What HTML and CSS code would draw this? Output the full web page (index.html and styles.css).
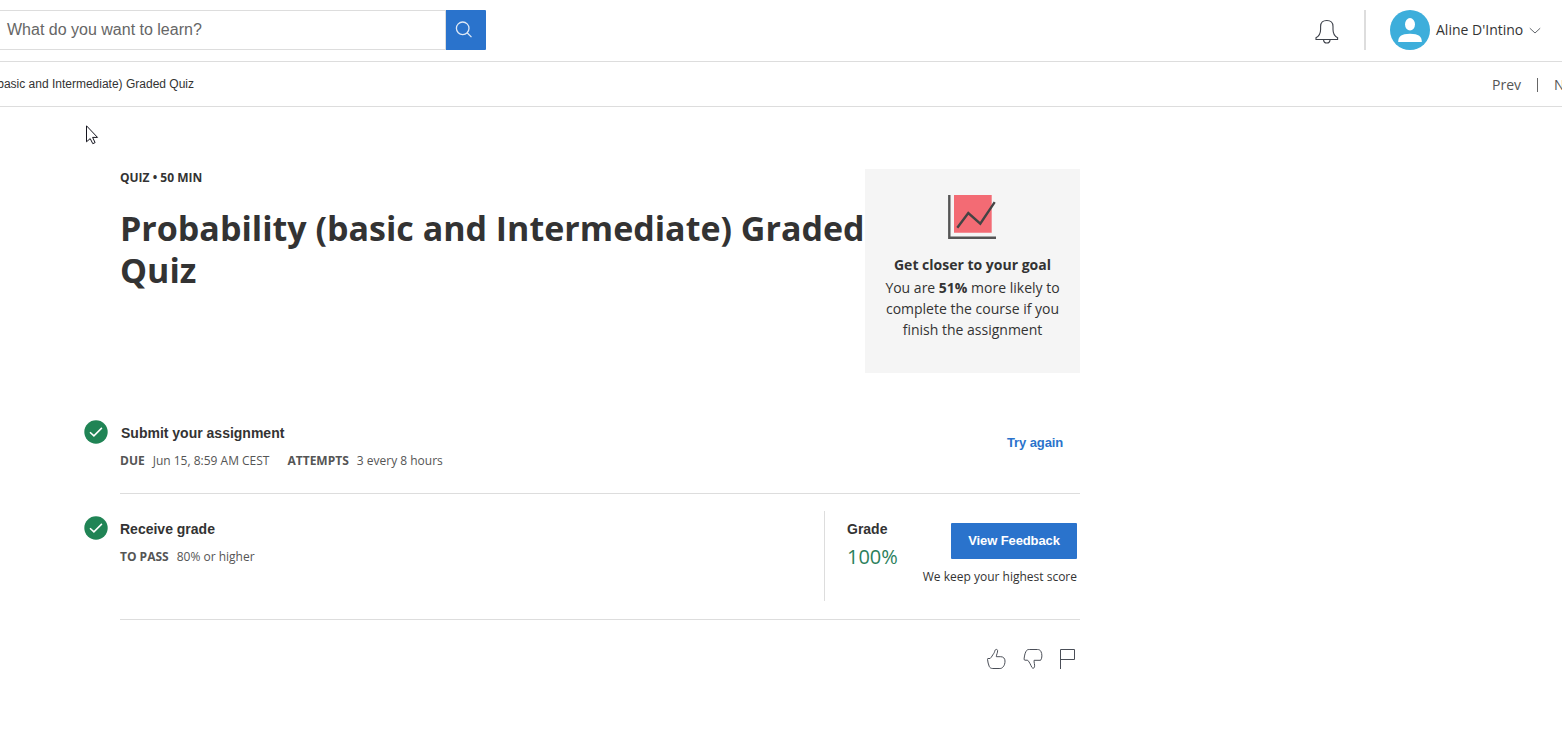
FILE: index.html
```html
<!DOCTYPE html>
<html lang="en">
<head>
<meta charset="utf-8">
<title>Probability (basic and Intermediate) Graded Quiz</title>
<link rel="stylesheet" href="styles.css">
</head>
<body>
<header class="topbar">
  <div class="search">
    <div class="search-field">What do you want to learn?</div>
    <button class="search-btn" aria-label="Search">
      <svg width="18" height="18" viewBox="0 0 18 18" fill="none" stroke="#dfe9f6" stroke-width="1.3"><circle cx="7.700" cy="7.300" r="6.300"/><path d="M12.100 11.700l4.400 4.400"/></svg>
    </button>
  </div>
  <div class="account">
    <svg class="bell" width="24" height="26" viewBox="0 0 24 26" fill="none" stroke="#3c4049" stroke-width="1.1"><path d="M1 20.500V18.700c3.300-1.700 4.600-4.300 4.600-8.200V7.500C5.600 3.500 8 1.500 11.800 1.500s6.200 2 6.200 6v3c0 3.900 1.300 6.500 4.600 8.200v1.800z"/><path d="M8.500 20.600c.2 2.200 1.500 3.400 3.300 3.400s3.100-1.200 3.300-3.400"/></svg>
    <span class="bar"></span>
    <svg class="avatar" width="40" height="40" viewBox="0 0 40 40"><circle cx="20" cy="20" r="20" fill="#3daedb"/><ellipse cx="20" cy="14.300" rx="5" ry="6.200" fill="#fff"/><path d="M8.200 32c0-5.500 3-8.200 11.800-8.200s11.800 2.700 11.800 8.200z" fill="#fff"/></svg>
    <span class="user">Aline D'Intino</span>
    <svg class="caret" width="12" height="8" viewBox="0 0 12 8" fill="none" stroke="#62666b" stroke-width="1"><path d="M.8 1.200L6 6l5.200-4.800"/></svg>
  </div>
</header>
<nav class="crumbs">
  <div class="crumb"><span>Probability (basic and Intermediate) Graded Quiz</span></div>
  <div class="pager"><span class="prev">Prev</span><span class="sep"></span><span class="next">Next</span></div>
</nav>
<main class="page">
  <section class="intro">
    <div class="heading">
      <p class="kind">QUIZ • 50 MIN</p>
      <h1 class="title">Probability (basic and Intermediate) Graded<br>Quiz</h1>
    </div>
    <aside class="goal">
      <svg class="chart" width="48" height="44" viewBox="0 0 48 44"><path d="M6 0h37.700v37.700H6z" fill="#f36b74"/><path d="M1.300 0v42.700H48" fill="none" stroke="#555" stroke-width="2.400"/><path d="M9.300 32.800L20.300 18l12 10.700L46.700 7.200" fill="none" stroke="#444" stroke-width="2.400"/></svg>
      <p class="goal-title">Get closer to your goal</p>
      <p class="goal-text"><span>You are <b>51%</b> more likely to</span><span>complete the course if you</span><span>finish the assignment</span></p>
    </aside>
  </section>
  <section class="step step-submit">
    <svg class="check" width="24" height="24" viewBox="0 0 24 24"><circle cx="12" cy="12" r="11.700" fill="#208455"/><path d="M6 12.200l3.900 3.700 8-8" fill="none" stroke="#fff" stroke-width="1.500"/></svg>
    <div class="info">
      <h2 class="submit-title">Submit your assignment</h2>
      <p class="meta"><b>DUE</b><span class="m-date">Jun 15, 8:59 AM CEST</span><b class="m-att">ATTEMPTS</b><span class="m-every">3 every 8 hours</span></p>
    </div>
    <a class="again">Try again</a>
  </section>
  <section class="step step-grade">
    <svg class="check" width="24" height="24" viewBox="0 0 24 24"><circle cx="12" cy="12" r="11.700" fill="#208455"/><path d="M6 12.200l3.900 3.700 8-8" fill="none" stroke="#fff" stroke-width="1.500"/></svg>
    <div class="info">
      <h2>Receive grade</h2>
      <p class="meta"><b>TO PASS</b><span class="m-high">80% or higher</span></p>
    </div>
    <div class="result">
      <div class="score"><h2>Grade</h2><p class="pct">100%</p></div>
      <div class="feedback"><button class="view">View Feedback</button><p class="keep">We keep your highest score</p></div>
    </div>
  </section>
  <footer class="rate">
    <svg width="20" height="22" viewBox="0 0 20 22" fill="none" stroke="#4a4e57" stroke-width="1"><path d="M2 10.500h2.100C5.800 8.900 6.400 7.200 7.600 5.700 8.700 4.300 8.600 3 9.200 2c.7-1 2.200-.7 2.400.5.200 2.200-1.300 4.200-1.300 6.200h4.400c2.600 0 4.300 1.700 4.300 4.300 0 2.400-.5 4.200-1.900 5.900-.9 1.100-1.900 1.600-3.200 1.600H6.800c-1.800 0-3-.7-3.600-2.200C2.300 16.200 1.800 14 1.500 11.300c0-.5.100-.8.500-.8z"/></svg>
    <svg width="20" height="22" viewBox="0 0 20 22" fill="none" stroke="#4a4e57" stroke-width="1"><path d="M17.600 12.300h-6.500c-.3 2.200.9 4.400.4 6.500-.3 1.600-1.800 1.900-2.600.6C7.700 17.300 6.800 14.300 4.600 12.200H2c-.7 0-1-.5-.9-1.300.3-2.600.7-5.200 1.800-7.300C3.700 2 4.600 1.500 6.300 1.500h8.300c1.400 0 2.600.6 3.200 1.700.8 1.400 1.100 3 1.100 4.700 0 1.600-.4 3.200-1.300 4.400z"/></svg>
    <svg width="18" height="22" viewBox="0 0 18 22" fill="none" stroke="#4a4e57" stroke-width="1"><path d="M1.500 21V1.500H15.500v10h-14"/></svg>
  </footer>
</main>
<svg class="pointer" width="13" height="20" viewBox="0 0 13 20" fill="#fff" stroke="#15151f" stroke-width="1"><path d="M.5.8v16l3.700-3.200 2.600 5.100 2.300-1.100-2.500-5.200h4.900z"/></svg>
</body>
</html>
```
FILE: styles.css
```css
* { box-sizing: border-box; }
html, body { height: 100%; }
body { margin: 0; overflow: hidden; background: #fff; color: #333; font-family: "Open Sans", sans-serif; white-space: nowrap; }
p, h1, h2 { margin: 0; }
button { border: 0; padding: 0; font: inherit; }
svg { display: block; flex: none; }

.topbar { display: flex; justify-content: space-between; height: 62px; padding: 10px 21px 0 0; border-bottom: 1px solid #ddd; }
.search { display: flex; height: 40px; width: 486px; }
.search-field { flex: 1; border: 1px solid #ddd; border-left: 0; padding-left: 7px; font: 16px/37px "Liberation Sans", Arial, sans-serif; color: #666; }
.search-btn { width: 40px; padding: 0 0 0 9px; background: #2a73cc; border-radius: 0 1px 1px 0; }
.account { display: flex; align-items: center; height: 40px; }
.bell { margin: 4px 25px 0 0; }
.bar { width: 2px; height: 40px; margin-right: 24px; background: #ddd; }
.user { margin: -2px 0 0 6px; width: 93px; font-size: 14px; }
.caret { margin-top: 2px; }

.crumbs { display: flex; justify-content: space-between; height: 45px; border-bottom: 1px solid #ddd; overflow: hidden; }
.crumb { display: flex; justify-content: flex-end; width: 194px; font: 12px/44px "Liberation Sans", Arial, sans-serif; }
.pager { display: flex; align-items: center; width: 70px; font-size: 14px; color: #555; }
.sep { flex: none; width: 1px; height: 14px; margin: 2px 16px 0; background: #666; }

.page { width: 960px; margin-left: 120px; padding-top: 62px; }
.intro { display: flex; height: 204px; }
.heading { width: 745px; }
.kind { font-size: 12px; line-height: 17px; font-weight: 700; }
.title { margin-top: 21px; font: 700 34px/42px "Open Sans", sans-serif; }
.goal { display: flex; flex-direction: column; align-items: center; width: 215px; padding-top: 26px; background: #f5f5f5; font-size: 14px; line-height: 21px; }
.chart { margin-right: 2px; }
.goal-title { margin-top: 15px; font-weight: 700; }
.goal-text { display: flex; flex-direction: column; align-items: center; margin-top: 2px; }

.step { display: flex; margin-left: -36px; }
.check { margin-right: 12px; }
.info { flex: 1; }
h2 { font: bold 14px/20px "Liberation Sans", Arial, sans-serif; }
.submit-title { padding-left: 1px; }
.meta { display: flex; margin-top: 9px; font-size: 12px; line-height: 18px; color: #555; }
.m-date { margin-left: 8px; }
.m-att { margin-left: 18px; }
.m-every, .m-high { margin-left: 8px; }
.step-submit { height: 74px; margin-top: 47px; }
.step-submit .info, .step-grade .info { padding-top: 3px; border-bottom: 1px solid #ddd; }
.again { width: 73px; padding-top: 13px; border-bottom: 1px solid #ddd; font: bold 13px/20px "Liberation Sans", Arial, sans-serif; letter-spacing: -.1px; color: #2a73cc; }
.step-grade { height: 104px; margin-top: 22px; }
.result { display: flex; justify-content: space-between; width: 256px; border-bottom: 1px solid #ddd; padding-right: 3px; }
.score { height: 90px; margin-top: -5px; padding: 8px 0 0 22px; border-left: 1px solid #ddd; }
.pct { margin-top: 3px; font-size: 20px; line-height: 30px; color: #2c7f5c; }
.feedback { display: flex; flex-direction: column; align-items: flex-end; padding-top: 7px; }
.view { width: 126px; height: 36px; border-radius: 1px; background: #2a73cc; color: #fff; font: bold 13px/36px "Liberation Sans", Arial, sans-serif; letter-spacing: -.1px; }
.keep { margin-top: 9px; font-size: 12px; line-height: 18px; }
.rate { display: flex; justify-content: flex-end; gap: 17px; margin-top: 28px; padding-right: 3px; }
.rate svg:last-child { margin-left: -1px; }
.pointer { position: absolute; left: 86px; top: 125px; }
```
